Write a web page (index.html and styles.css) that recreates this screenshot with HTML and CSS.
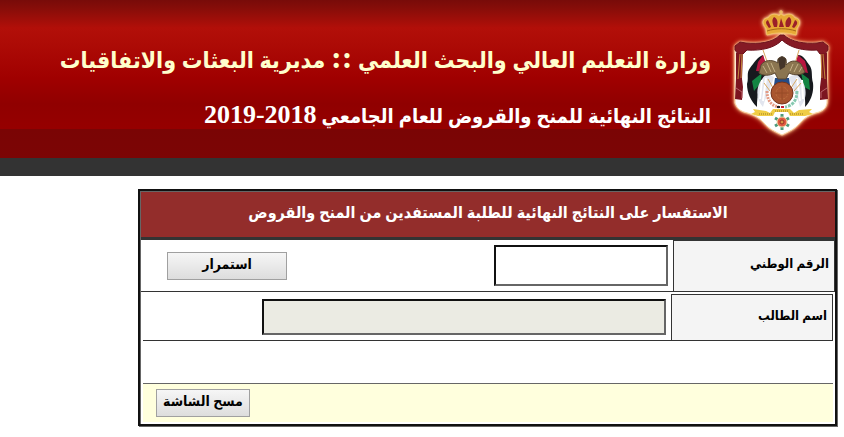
FILE: index.html
```
<!DOCTYPE html>
<html lang="ar" dir="rtl">
<head>
  <meta charset="utf-8">
  <title>وزارة التعليم العالي والبحث العلمي</title>
  <link rel="stylesheet" href="styles.css">
</head>
<body>
  <header class="header">
    <svg class="logo" viewBox="8 8 98 130" aria-hidden="true">
      <!-- mantle -->
      <path d="M57 34C47 44 32 45 18 44L10 50L10 103C12 108 14 110 19 112C27 114 34 117 39 123C44 129 51 132 57 135C63 132 70 129 75 123C80 117 86 114 94 112C99 110 101 108 102 103L102 50L96 44C82 45 67 44 57 34Z" fill="#fff" stroke="#f9d3a4" stroke-width="1"/>
      <path d="M55 35C47 43 34 44 21 43L15 42L10 46L10 50L13 54L18 54L22 50C36 51 50 48 57 40C65 48 79 51 92 50L95 54L100 54L103 50L103 46L98 42L92 43C80 44 66 42 59 35Z" fill="#851a25" stroke="#6d131d" stroke-width="1"/>
      <path d="M11 53H18L17 79L18 87L17 100L10 99L11 79Z M96 53H102L102 79L103 99L95 100L95 87L96 79Z" fill="#7c1520"/>
      <path d="M15 54L13 79M17 54L16 78M98 54L100 79M96 54L97 78" stroke="#c58a3d" stroke-width="1" fill="none"/>
      <path d="M11 88L17 92V98M102 88L96 92V98" stroke="#b9626a" fill="none"/>
      <!-- crown -->
      <path d="M42 35L41 28C36 23 38 18 43 18C45 14 51 13 54 16L56 14L59 16C63 13 68 14 70 18C75 18 76 24 72 28L71 35C62 32 51 32 42 35Z" fill="#e7a936" stroke="#f0c060" stroke-width="1"/>
      <path d="M43 20C39 22 42 25 44 28L46 27ZM49 17C46 20 48 24 49 27H52C53 23 53 19 49 17ZM64 17C60 20 60 24 61 27H64C67 23 67 19 64 17ZM70 20L67 27L69 28C72 25 74 22 70 20ZM56 18L54 27H59Z" fill="#9b2028"/>
      <path d="M42 31C51 28 62 28 71 31" fill="none" stroke="#a56816"/>
      <path d="M56 10V15M54 12H58" stroke="#efc363" stroke-width="1"/>
      <!-- flags -->
      <path d="M38 55C32 57 29 63 25 68C21 73 24 78 22 84C22 93 26 101 32 107C32 95 34 84 42 75Z M73 55C79 55 81 61 85 66C88 71 86 76 88 83C89 92 86 101 80 107C81 95 78 84 70 75Z" fill="#17191e"/>
      <path d="M38 55L44 72L31 71L33 62Z M73 55L80 61L83 73L68 70Z" fill="#b7153f"/>
      <path d="M27 81L37 73L35 84L29 91Z M76 73L84 79L85 90L79 87Z" fill="#138543"/>
      <path d="M42 74C31 82 29 98 38 107C40 98 45 91 49 77Z M71 74L64 77C68 90 73 98 75 107C84 98 82 82 71 74Z" fill="#e2e5ee"/>
      <path d="M37 80L35 99M41 78L38 101M77 80L78 99M72 78L75 101" stroke="#fff" stroke-width="2" fill="none"/>
      <path d="M38 50L44 67M74 50L69 67M43 79L48 88M39 83L45 91M72 79L66 88M76 83L69 91" stroke="#d9a860" fill="none"/>
      <!-- eagle, globe and shield -->
      <path d="M50 78H64L65 85H49Z" fill="#234b87"/>
      <path d="M57 57C53 57 52 60 53 63C47 59 39 60 36 65L34 73C38 76 44 76 50 73L53 79H61L64 73C70 76 77 75 80 72L76 64C70 59 65 61 61 65C62 60 61 57 57 57Z" fill="#8b7550" stroke="#594630" stroke-width="1"/>
      <path d="M38 66L42 73M42 63L46 72M46 63L50 72M73 64L69 72M68 64L65 71M77 67L74 72" stroke="#c5b187" fill="none"/>
      <path d="M53 59L57 56L61 59L60 67L55 70Z" fill="#44352a"/>
      <circle cx="57" cy="93" r="11" fill="#a95630" stroke="#75351d"/>
      <circle cx="57" cy="93" r="6" fill="none" stroke="#bd713f" stroke-dasharray="2 1"/>
      <path d="M57 86V100M50 93H64" stroke="#964a27"/>
      <path d="M42 91C42 101 47 106 54 107" fill="none" stroke="#e39a83" stroke-width="3" stroke-dasharray="2 1"/>
      <path d="M72 91C72 101 67 106 60 107" fill="none" stroke="#86c9b0" stroke-width="3" stroke-dasharray="3 1"/>
      <path d="M52 107H55" stroke="#222" stroke-width="2"/><path d="M56 107H59" stroke="#c31e36" stroke-width="2"/>
      <!-- ribbon and medal -->
      <path d="M28 109L41 111L45 113L48 109H65L69 113L74 110L87 109L84 112L88 114L80 116H65L63 112H50L48 116H33L26 114L30 112Z" fill="#f0cd45"/>
      <path d="M34 114H48M50 111H63M65 114H79" stroke="#9b7a22" stroke-width="1" stroke-dasharray="1 1"/>
      <path d="M57 114V130M50 118L64 126M50 126L64 118" stroke="#4d9a7b" stroke-width="3"/>
      <circle cx="57" cy="122" r="5" fill="#e25b43" stroke="#eee0ac"/>
      <circle cx="57" cy="122" r="2" fill="#d99645" stroke="#9c3025"/>
    </svg>
    <div class="titles">
      <h1>وزارة التعليم العالي والبحث العلمي <span class="separator">::</span> مديرية البعثات والاتفاقيات</h1>
      <h2>النتائج النهائية للمنح والقروض للعام الجامعي <span class="year">2018-2019</span></h2>
    </div>
  </header>

  <form class="panel">
    <h3 class="panel-title">الاستفسار على النتائج النهائية للطلبة المستفدين من المنح والقروض</h3>
    <div class="row">
      <label for="national-id">الرقم الوطني</label>
      <input type="text" id="national-id" class="id-input">
      <button type="button" class="btn btn-next">استمرار</button>
    </div>
    <div class="details">
      <div class="row">
        <label for="student-name">اسم الطالب</label>
        <input type="text" id="student-name" class="name-input" readonly>
      </div>
      <div class="message"></div>
      <div class="footer">
        <button type="reset" class="btn">مسح الشاشة</button>
      </div>
    </div>
  </form>
</body>
</html>
```
FILE: styles.css
```
* {
  box-sizing: border-box;
}

body {
  margin: 0;
  background-color: #fff;
  font-family: "Liberation Serif", "DejaVu Sans Condensed", "DejaVu Sans", serif;
  font-weight: bold;
}

.header {
  display: flex;
  gap: 22px;
  min-height: 176px;
  padding: 8px 13px 0;
  border-bottom: 18px solid #333;
  background: linear-gradient(#780b09 0, #860d09 8px, #b20f09 28px, #ad0b06 44px, #a00000 78px, #900000 104px, #960000 129px, #7a0505 129px, #7c0505 158px);
}

.logo {
  flex: none;
  width: 98px;
  height: 130px;
  overflow: visible;
  filter: drop-shadow(0 0 1px #ffdcae) drop-shadow(0 0 2px #ffb070);
}

.titles {
  padding-top: 27px;
  white-space: nowrap;
}

h1 {
  margin: 0;
  color: #ffc;
  font-size: 23px;
  line-height: 44px;
}

.separator {
  font-size: 32px;
}

h2 {
  margin: 10px 0 0;
  color: #fff;
  font-size: 20px;
  line-height: 44px;
}

.year {
  font-size: 26px;
}

.panel {
  max-width: 699px;
  margin: 13px 7px 9px;
  padding: 1px 0 0 1px;
  border: 2px solid #111;
  box-shadow: 1px 1px 0 #666, inset 1px 1px 0 #666;
}

.panel-title {
  margin: 0;
  padding-bottom: 3px;
  border-bottom: 3px solid #333;
  background-color: #932d2b;
  color: #fff;
  font-size: 16px;
  line-height: 42px;
  text-align: center;
}

.row {
  display: flex;
  align-items: center;
  gap: 5px;
  min-height: 52px;
  border-bottom: 1px solid #333;
}

.row label {
  display: flex;
  align-items: center;
  align-self: stretch;
  width: 162px;
  padding: 0 5px 4px;
  border: 1px solid #333;
  border-bottom: 0;
  background-color: #f4f4f4;
  font-size: 13px;
}

.row input {
  min-width: 0;
  padding: 0 4px;
  border: 2px solid;
  border-color: #111 #666 #666 #111;
  font: inherit;
}

.id-input {
  width: 174px;
  height: 41px;
}

.name-input {
  width: 404px;
  height: 36px;
  background-color: #ebebe3;
}

.details {
  padding: 2px;
}

.details .row {
  min-height: 47px;
}

.message {
  height: 42px;
}

.footer {
  display: flex;
  justify-content: flex-end;
  padding: 5px 13px;
  border-top: 1px solid #666;
  background-color: #ffd;
}

.btn {
  min-width: 94px;
  height: 28px;
  padding: 0 6px 2px;
  border: 1px solid #a0a0a0;
  background: linear-gradient(#f6f6f6, #ddd);
  color: #000;
  font: inherit;
  font-size: 14px;
  line-height: 20px;
}

.btn-next {
  width: 120px;
  margin-right: auto;
  margin-left: 26px;
}
```
